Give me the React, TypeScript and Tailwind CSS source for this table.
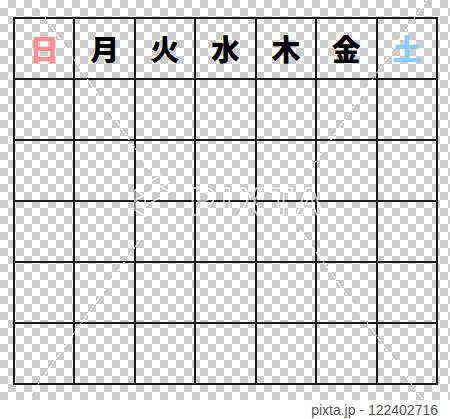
const days = [
  { label: '日', color: 'text-[#ff8e8e]' },
  { label: '月', color: 'text-black' },
  { label: '火', color: 'text-black' },
  { label: '水', color: 'text-black' },
  { label: '木', color: 'text-black' },
  { label: '金', color: 'text-black' },
  { label: '土', color: 'text-[#8ccff5]' },
]

// 5 empty weeks below the header row
const cells = Array.from({ length: 35 }, (_, i) => i)

export default function App() {
  return (
    <div className="w-[450px] h-[419px] flex flex-col bg-white font-['Noto_Sans_CJK_JP','Noto_Sans',sans-serif]">

      {/* Transparent-looking canvas */}
      <div className="relative h-[400px] pt-[17px] pl-[13px] bg-[image:repeating-conic-gradient(#cccccc_0_25%,#ffffff_0_50%)] bg-[length:16px_16px]">
        <div className="grid grid-cols-7 grid-rows-6 w-[425px] h-[368px] border-l-2 border-t-2 border-[#1a1a1a]">
          {days.map(d => (
            <div
              key={d.label}
              className={`flex items-center justify-center border-r-2 border-b-2 border-[#1a1a1a] text-[29px] font-black leading-none ${d.color}`}
            >
              {d.label}
            </div>
          ))}
          {cells.map(i => (
            <div key={i} className="border-r-2 border-b-2 border-[#1a1a1a]" />
          ))}
        </div>

        {/* Watermark */}
        <svg className="absolute inset-0 pointer-events-none" width="450" height="400" viewBox="0 0 450 400">
          <g stroke="#ffffff" strokeWidth="1.2" strokeDasharray="2 1" opacity="0.8" fill="none">
            <line x1="33" y1="0" x2="150" y2="170" />
            <line x1="300" y1="230" x2="423" y2="400" />
            <line x1="427" y1="0" x2="310" y2="170" />
            <line x1="140" y1="240" x2="27" y2="400" />
          </g>
          <g stroke="#ffffff" strokeWidth="1.5" fill="none" opacity="0.7">
            <path d="M135 190 L160 176 L170 182 L145 196 Z" />
            <path d="M135 200 L160 186 L170 192 L145 206 Z" />
            <path d="M135 190 L135 210 L145 216 L145 196" />
          </g>
          <text
            x="190"
            y="215"
            fontSize="38"
            fontFamily="Liberation Sans, sans-serif"
            fontWeight="700"
            letterSpacing="6"
            fill="none"
            stroke="#ffffff"
            strokeWidth="1.5"
            opacity="0.7"
          >
            PIXTA
          </text>
        </svg>
      </div>

      {/* Footer id */}
      <div className="h-[19px] flex items-center justify-end pr-[12px] text-[14px] leading-none text-[#555555] font-['Liberation_Sans',sans-serif]">
        pixta.jp - 122402716
      </div>
    </div>
  )
}
